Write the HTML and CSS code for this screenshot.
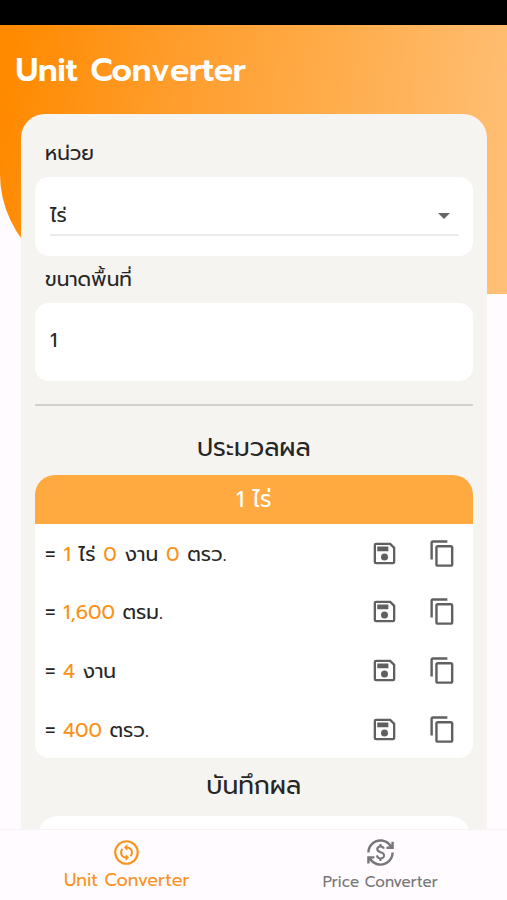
FILE: index.html
```
<!DOCTYPE html>
<html lang="th">
<head>
<meta charset="utf-8">
<title>Unit Converter</title>
<link rel="stylesheet" href="styles.css">
</head>
<body>
<svg class="defs" width="0" height="0" aria-hidden="true">
  <symbol id="save" viewBox="0 0 24 24"><path d="M5 4h11.700L20 7.300V19a1 1 0 0 1-1 1H5a1 1 0 0 1-1-1V5a1 1 0 0 1 1-1z" fill="none" stroke="currentColor" stroke-width="1.900"/><path d="M6 6.200h9.200v3.900H6z" fill="currentColor"/><circle cx="12" cy="14.900" r="2.900" fill="currentColor"/></symbol>
  <symbol id="copy" viewBox="0 0 24 24"><path fill="currentColor" d="M16 1H4c-1.100 0-2 .9-2 2v14h2V3h12V1zm3 4H8c-1.100 0-2 .9-2 2v14c0 1.100.9 2 2 2h11c1.100 0 2-.9 2-2V7c0-1.100-.9-2-2-2zm0 16H8V7h11v14z"/></symbol>
</svg>
<div class="status"></div>
<main class="page">
  <div class="backdrop"></div>
  <h1 class="title">Unit Converter</h1>
  <section class="card">
    <div class="label label-unit">หน่วย</div>
    <div class="field"><div class="select"><span>ไร่</span><i class="caret"></i></div></div>
    <div class="label label-area">ขนาดพื้นที่</div>
    <div class="field field-input">1</div>
    <hr class="rule">
    <h2 class="heading">ประมวลผล</h2>
    <div class="results">
      <div class="results-head">1 ไร่</div>
      <div class="row row-mixed"><p>= <b>1</b> ไร่ <b>0</b> งาน <b>0</b> ตรว.</p><svg class="icon"><use href="#save"/></svg><svg class="icon"><use href="#copy"/></svg></div>
      <div class="row"><p>= <b>1,600</b> ตรม.</p><svg class="icon"><use href="#save"/></svg><svg class="icon"><use href="#copy"/></svg></div>
      <div class="row"><p>= <b>4</b> งาน</p><svg class="icon"><use href="#save"/></svg><svg class="icon"><use href="#copy"/></svg></div>
      <div class="row"><p>= <b>400</b> ตรว.</p><svg class="icon"><use href="#save"/></svg><svg class="icon"><use href="#copy"/></svg></div>
    </div>
    <h2 class="heading heading-saved">บันทึกผล</h2>
    <div class="saved"></div>
  </section>
</main>
<nav class="tabs">
  <a class="tab active">
    <svg class="tab-icon" viewBox="0 0 24 24"><g fill="none" stroke="currentColor"><circle cx="12" cy="12" r="9.300" stroke-width="1.800"/><path stroke-width="1.700" d="M12 7.800c3 0 4.500 2 4.500 4.200 0 1.200-.4 2.200-1.200 3M12 16.200c-3 0-4.500-2-4.500-4.200 0-1.200.4-2.200 1.200-3"/></g><path fill="currentColor" d="M12.700 5v5.500L9.900 7.800zM11.300 19v-5.500l2.800 2.700z"/></svg>
    <span class="tab-text">Unit Converter</span>
  </a>
  <a class="tab">
    <svg class="tab-icon" viewBox="0 0 24 24"><path fill="currentColor" d="M12.890 11.100c-1.780-.59-2.640-.96-2.640-1.900 0-1.020 1.110-1.390 1.810-1.390 1.310 0 1.790.99 1.900 1.340l1.580-.67c-.15-.44-.82-1.910-2.660-2.230V5h-1.750v1.260c-2.600.56-2.620 2.850-2.620 2.960 0 2.270 2.250 2.910 3.350 3.310 1.580.56 2.280 1.070 2.280 2.030 0 1.130-1.050 1.610-1.980 1.610-1.820 0-2.340-1.870-2.400-2.090l-1.660.67c.63 2.190 2.280 2.780 2.900 2.960V19h1.750v-1.240c.52-.09 3.020-.59 3.020-3.220.01-1.390-.6-2.610-3-3.440zM3 21H1v-6h6v2H4.520c1.610 2.410 4.360 4 7.480 4 4.970 0 9-4.030 9-9h2c0 6.080-4.920 11-11 11-3.720 0-7.010-1.850-9-4.670V21zm-2-9C1 5.920 5.920 1 12 1c3.720 0 7.010 1.850 9 4.670V3h2v6h-6V7h2.480C17.870 4.590 15.120 3 12 3c-4.970 0-9 4.030-9 9H1z"/></svg>
    <span class="tab-text">Price Converter</span>
  </a>
</nav>
</body>
</html>
```
FILE: styles.css
```
* { box-sizing: border-box; }
body {
  margin: 0;
  height: 900px;
  display: flex;
  flex-direction: column;
  overflow: hidden;
  background: #fffbff;
  color: #262626;
  font-family: Prompt, Inter, "Noto Sans Thai", "Noto Sans", sans-serif;
  font-size: 20px;
}
h1, h2, p { margin: 0; font-weight: 400; }
.defs { position: absolute; }
.status { flex: none; height: 25px; background: #000; }
.page { position: relative; flex: none; height: 804px; overflow: hidden; padding: 0 20px 0 21px; }
.backdrop {
  position: absolute;
  inset: 0 0 auto;
  height: 269px;
  border-bottom-left-radius: 136px 120px;
  background: linear-gradient(98deg, #ff8a00 3%, #ff9d2c 33%, #ffac4a 62%, #ffc078 100%);
}
.title { position: relative; height: 89px; line-height: 91px; margin-left: -5.500px; color: #fff; font-size: 32px; font-weight: 600; letter-spacing: -0.350px; word-spacing: 2px; white-space: nowrap; }
.card { position: relative; height: 740px; padding: 0 14.500px 0 14px; border-radius: 24px 24px 0 0; background: #f5f4f0; }
.label { padding-left: 10px; white-space: nowrap; }
.label-unit { height: 63px; line-height: 79px; }
.label-area { height: 47px; line-height: 47px; }
.field { height: 78.500px; padding: 17px 14px 0 15px; border-radius: 14px; background: #fff; }
.select { display: flex; align-items: center; justify-content: space-between; height: 42px; padding: 2px 9px 0 0; border-bottom: 2px solid #ebebeb; }
.caret { border: 6px solid transparent; border-top-color: #666; border-bottom: 0; margin-top: 2px; }
.field-input { padding-top: 0; line-height: 75px; }
.rule { height: 2px; margin: 23px 0 0; border: 0; background: #d2d1ce; }
.heading { height: 69px; line-height: 85px; text-align: center; font-size: 25px; }
.results { border-radius: 20px 20px 14px 14px; overflow: hidden; background: #fff; }
.results-head { height: 49px; line-height: 49px; background: #ffaa40; color: #fff; text-align: center; font-size: 22.500px; }
.row { display: flex; align-items: center; height: 58.600px; padding: 0 15.500px 0 10px; }
.row p { flex: 1; white-space: nowrap; font-size: 20.100px; padding-top: 1px; }
.row-mixed p { word-spacing: 0.400px; }
.row b { font-weight: 400; color: #fa9119; }
.icon { width: 29px; height: 29px; margin-left: 29px; color: #606060; }
.heading-saved { height: 58px; line-height: 57px; }
.saved { height: 60px; margin: 0 3px; border-radius: 20px; background: #fff; }
.tabs { position: relative; display: flex; flex: 1; border-top: 1px solid #f6f3f4; background: #fffbff; }
.tab { flex: 1; display: flex; flex-direction: column; align-items: center; padding-top: 8px; color: #777; font-size: 15.200px; white-space: nowrap; }
.tab-icon { width: 29px; height: 29px; }
.tab-text { line-height: 30px; }
.active { color: #f8931f; font-size: 17.700px; }
.active .tab-text { line-height: 27px; }
```
